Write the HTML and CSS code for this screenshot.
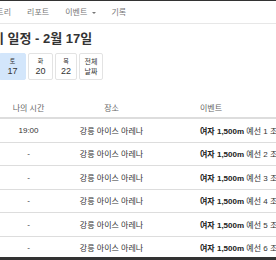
FILE: index.html
```html
<!DOCTYPE html>
<html lang="ko">
<head>
  <meta charset="UTF-8" />
  <title>경기 일정</title>
  <link rel="stylesheet" href="styles.css">
</head>
<body>
  <div class="topbar"></div>
  <nav class="navbar">
    <ul class="nav">
      <li>엔트리</li>
      <li>리포트</li>
      <li>이벤트 <span class="caret"></span></li>
      <li>기록</li>
    </ul>
  </nav>

  <div class="page">
    <h1 class="title">경기 일정 - 2월 17일</h1>

    <div class="days">
      <div class="day active"><span class="dow">토</span><span class="num">17</span></div>
      <div class="day tue"><span class="dow">화</span><span class="num">20</span></div>
      <div class="day thu"><span class="dow">목</span><span class="num">22</span></div>
      <div class="day all"><span>전체</span><span>날짜</span></div>
    </div>

    <table class="schedule">
      <colgroup>
        <col class="c0">
        <col class="c1">
        <col class="c2">
        <col class="c3">
      </colgroup>
      <thead>
        <tr>
          <th class="c0">시간</th>
          <th class="c1">나의 시간</th>
          <th class="c2">장소</th>
          <th class="c3">이벤트</th>
        </tr>
      </thead>
      <tbody>
        <tr>
          <td class="c0">19:00</td>
          <td class="c1">19:00</td>
          <td class="c2">강릉 아이스 아레나</td>
          <td class="c3"><b>여자 1,500m</b> 예선 1 조</td>
        </tr>
        <tr>
          <td class="c0">19:00</td>
          <td class="c1">-</td>
          <td class="c2">강릉 아이스 아레나</td>
          <td class="c3"><b>여자 1,500m</b> 예선 2 조</td>
        </tr>
        <tr>
          <td class="c0">19:00</td>
          <td class="c1">-</td>
          <td class="c2">강릉 아이스 아레나</td>
          <td class="c3"><b>여자 1,500m</b> 예선 3 조</td>
        </tr>
        <tr>
          <td class="c0">19:00</td>
          <td class="c1">-</td>
          <td class="c2">강릉 아이스 아레나</td>
          <td class="c3"><b>여자 1,500m</b> 예선 4 조</td>
        </tr>
        <tr>
          <td class="c0">19:00</td>
          <td class="c1">-</td>
          <td class="c2">강릉 아이스 아레나</td>
          <td class="c3"><b>여자 1,500m</b> 예선 5 조</td>
        </tr>
        <tr>
          <td class="c0">19:00</td>
          <td class="c1">-</td>
          <td class="c2">강릉 아이스 아레나</td>
          <td class="c3"><b>여자 1,500m</b> 예선 6 조</td>
        </tr>
      </tbody>
    </table>
  </div>
  <div class="footer"></div>
</body>
</html>
```

FILE: styles.css
```css
html, body {
  margin: 0;
  padding: 0;
  overflow: hidden;
}

body {
  font-family: "Liberation Sans", "Noto Sans CJK KR", sans-serif;
  color: #333;
  background: #fff;
  width: 276px;
  height: 260px;
  position: relative;
}

.topbar {
  height: 1px;
  background: #333;
}

.navbar {
  height: 22px;
  border-bottom: 1px solid #e7e7e7;
  background: #fff;
}

.nav {
  list-style: none;
  margin: 0 0 0 -11px;
  padding: 0;
  display: flex;
  gap: 16px;
  font-size: 8px;
  line-height: 23px;
  color: #777;
  white-space: nowrap;
}

.caret {
  display: inline-block;
  width: 0;
  height: 0;
  margin-left: 2px;
  vertical-align: middle;
  border-top: 2px solid #777;
  border-left: 2px solid transparent;
  border-right: 2px solid transparent;
}

.page {
  white-space: nowrap;
}

.title {
  margin: 6px 0 5px -20px;
  font-size: 13px;
  font-weight: bold;
  line-height: 18px;
}

.days {
  display: flex;
  gap: 2px;
  margin-left: -1px;
}

.day {
  box-sizing: border-box;
  width: 27px;
  height: 27px;
  border: 1px solid #e3e3e3;
  border-radius: 2px;
  display: flex;
  flex-direction: column;
  align-items: center;
  justify-content: center;
  color: #333;
}

.day.active {
  background: #d3e6fb;
  border-color: #d3e6fb;
}

.day.tue { width: 25px; }
.day.thu { width: 22px; }
.day.all {
  width: 24px;
  font-size: 7px;
  line-height: 10px;
}

.dow {
  font-size: 6px;
  line-height: 10px;
}

.num {
  font-size: 9px;
  line-height: 11px;
}

.schedule {
  margin: 17px 0 0 -37px;
  width: 360px;
  border-collapse: collapse;
  table-layout: fixed;
  font-size: 8px;
}

col.c0 { width: 38px; }
col.c1 { width: 55px; }
col.c2 { width: 111px; }
col.c3 { width: 156px; }

.schedule th,
.schedule td {
  padding: 0 4px;
  text-align: center;
  overflow: visible;
}

.schedule th {
  height: 20px;
  font-weight: normal;
  color: #666;
  border-bottom: 2px solid #ddd;
}

.schedule td {
  height: 22.5px;
  border-bottom: 1px solid #ddd;
}

.schedule .c0 {
  text-align: right;
  padding-right: 3px;
}

.schedule .c3 {
  text-align: left;
  padding-left: 33px;
}

.schedule b {
  color: #222;
}

.footer {
  position: absolute;
  left: 0;
  right: 0;
  bottom: 0;
  height: 3px;
  background: #333;
}
```
